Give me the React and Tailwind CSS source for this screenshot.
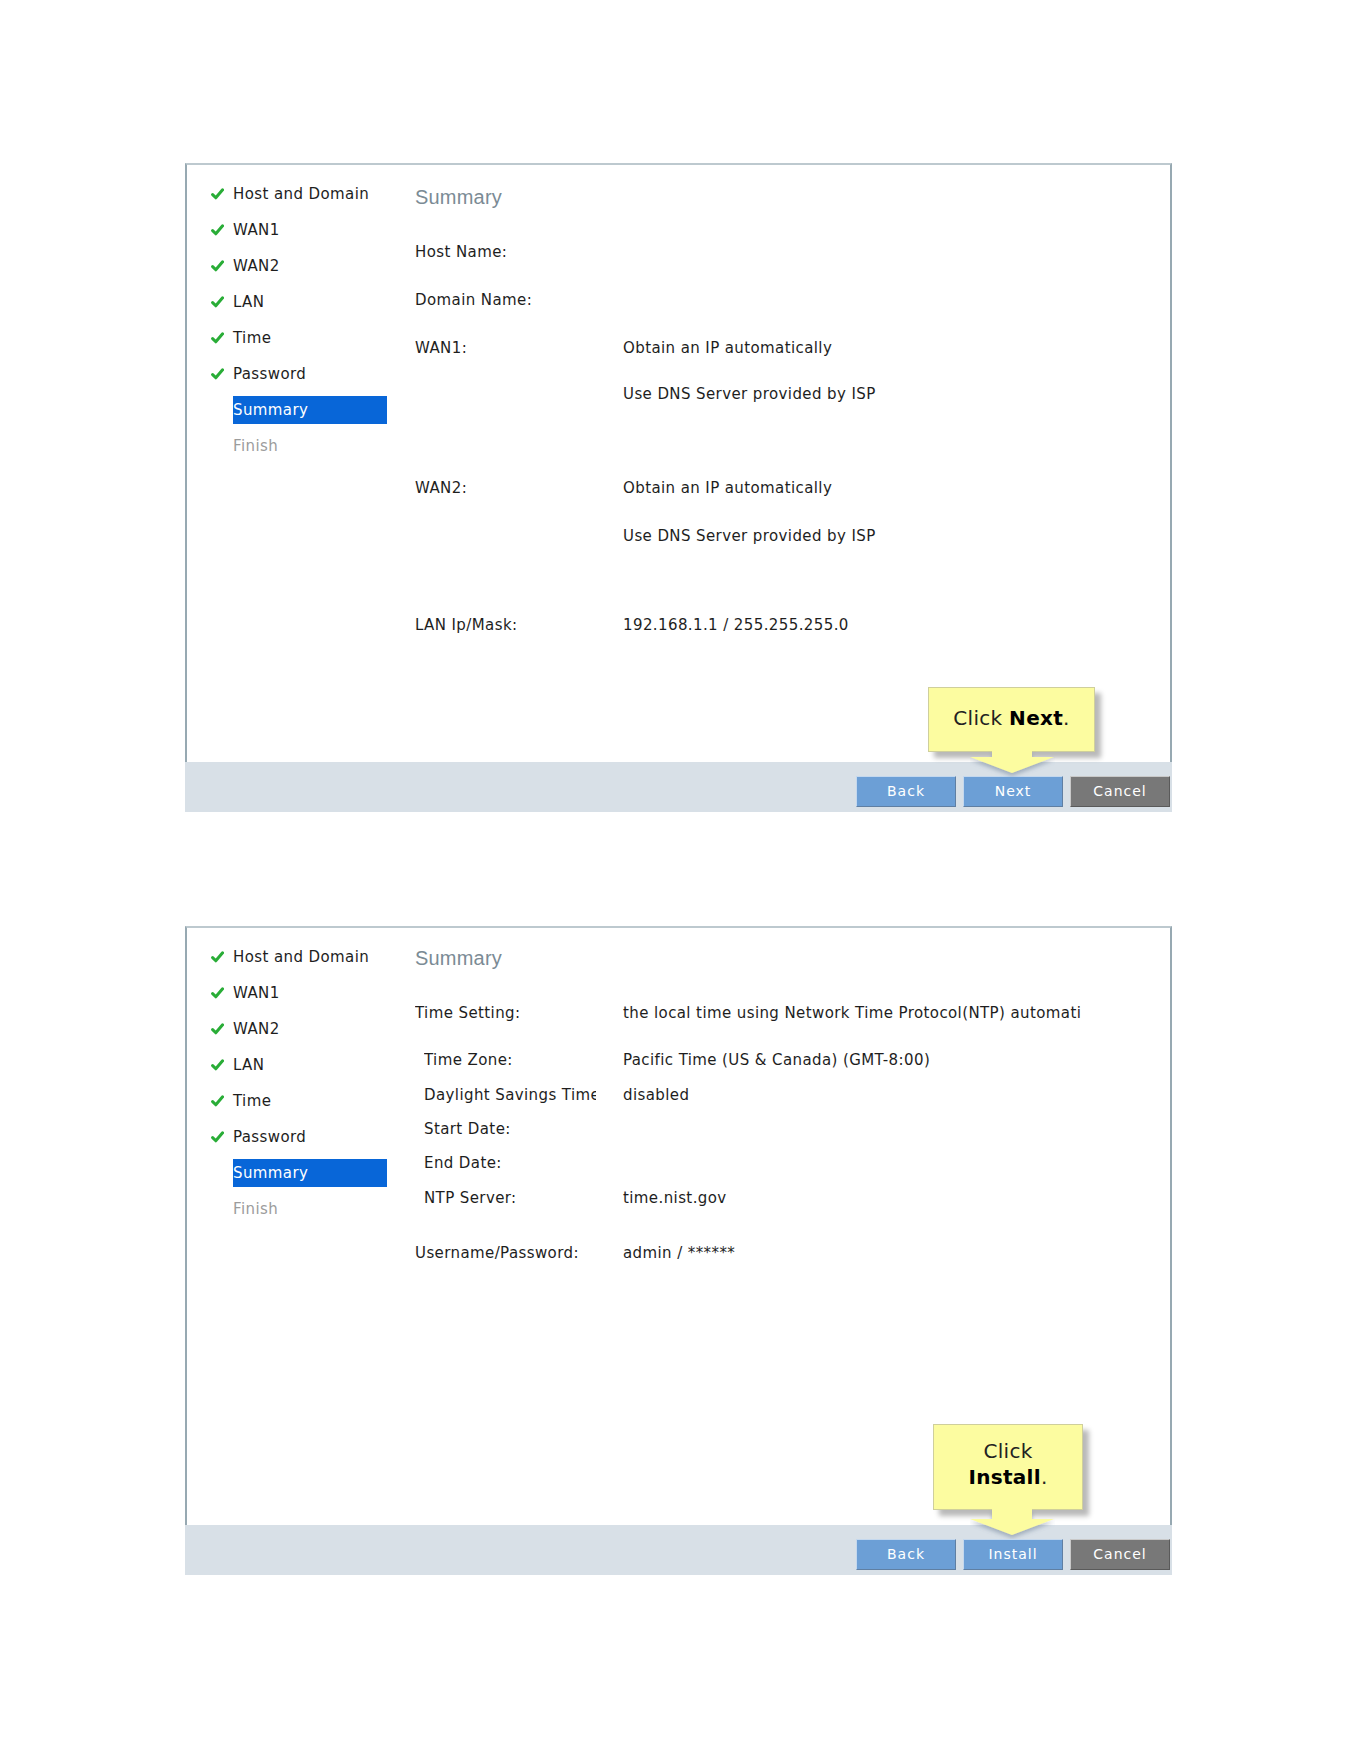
const NAV = ['Host and Domain', 'WAN1', 'WAN2', 'LAN', 'Time', 'Password']

function Check() {
  return (
    <svg width="13" height="12" viewBox="0 0 13 12" className="-ml-px shrink-0">
      <path d="M1.6 6.6 L4.8 9.8 L11.6 1.8" fill="none" stroke="#29ad37" strokeWidth="3" strokeLinecap="round" strokeLinejoin="round" />
    </svg>
  )
}

function Nav() {
  return (
    <div className="w-[228px] shrink-0 pl-[25px] pt-[11px]">
      {NAV.map((n) => (
        <div key={n} className="flex h-9 items-center gap-[9px]">
          <Check />
          <span>{n}</span>
        </div>
      ))}
      <div className="flex h-9 items-center pl-[21px]">
        <div className="flex h-[28px] w-[154px] items-center bg-[#0866d8] text-white">Summary</div>
      </div>
      <div className="flex h-9 items-center pl-[21px] text-[#9c9c9c]">Finish</div>
    </div>
  )
}

function Row({ label, value, indent, className }) {
  return (
    <div className={`flex h-5 items-center ${className}`}>
      <div className={`w-[208px] shrink-0 ${indent ? 'pl-[9px]' : ''}`}>
        <div className="w-[172px] overflow-hidden whitespace-nowrap">{label}</div>
      </div>
      <div className="whitespace-nowrap">{value}</div>
    </div>
  )
}

function Button({ children, gray }) {
  return (
    <div
      className={`flex h-[31px] w-[100px] items-center justify-center border text-[14px] tracking-[1px] text-white ${
        gray
          ? 'border-t-[#c9c9c9] border-l-[#c9c9c9] border-r-[#5a5a5a] border-b-[#5a5a5a] bg-[#787878]'
          : 'border-t-[#c4d8ee] border-l-[#c4d8ee] border-r-[#5f7fa3] border-b-[#5f7fa3] bg-[#6c9fd6]'
      }`}
    >
      {children}
    </div>
  )
}

function Arrow({ stem, className }) {
  const h = stem + 16
  return (
    <svg width="85" height={h + 4} viewBox={`0 0 85 ${h + 4}`} className={`absolute ${className}`}>
      <defs>
        <filter id={`sh${stem}`} x="-20%" y="-20%" width="140%" height="160%">
          <feDropShadow dx="0" dy="3" stdDeviation="2" floodColor="#5c7088" floodOpacity="0.45" />
        </filter>
      </defs>
      <polygon
        points={`22,0 62,0 62,${stem} 84,${stem} 42,${h} 0,${stem} 22,${stem}`}
        fill="#fcfca0"
        filter={`url(#sh${stem})`}
      />
    </svg>
  )
}

function Panel({ rows, headTop, callout, last }) {
  return (
    <div className="relative w-[987px]">
      <div className="flex h-[599px] border-x-2 border-t-2 border-x-[#97a9b2] border-t-[#bdc9cf] bg-white">
        <Nav />
        <div className={`flex-1 ${headTop}`}>
          <div className="h-[26px] font-['Liberation_Sans',Arial,sans-serif] text-[20px] leading-[26px] tracking-[0.2px] text-[#7b8b95]">
            Summary
          </div>
          {rows}
        </div>
      </div>
      <div className="flex h-[50px] items-start justify-end gap-[7px] bg-[#d8e0e7] pr-[2px] pt-[14px]">
        <Button>Back</Button>
        <Button>{last}</Button>
        <Button gray>Cancel</Button>
      </div>
      {callout}
    </div>
  )
}

export default function App() {
  const rows1 = (
    <>
      <Row label="Host Name:" className="mt-[32px]" />
      <Row label="Domain Name:" className="mt-[28px]" />
      <Row label="WAN1:" value="Obtain an IP automatically" className="mt-[28px]" />
      <Row value="Use DNS Server provided by ISP" className="mt-[26px]" />
      <Row label="WAN2:" value="Obtain an IP automatically" className="mt-[74px]" />
      <Row value="Use DNS Server provided by ISP" className="mt-[28px]" />
      <Row label="LAN Ip/Mask:" value="192.168.1.1 / 255.255.255.0" className="mt-[69px]" />
    </>
  )
  const rows2 = (
    <>
      <Row label="Time Setting:" value="the local time using Network Time Protocol(NTP) automati" className="mt-[32px]" />
      <Row indent label="Time Zone:" value="Pacific Time (US & Canada) (GMT-8:00)" className="mt-[27px]" />
      <Row indent label="Daylight Savings Time:" value="disabled" className="mt-[15px]" />
      <Row indent label="Start Date:" className="mt-[14px]" />
      <Row indent label="End Date:" className="mt-[14px]" />
      <Row indent label="NTP Server:" value="time.nist.gov" className="mt-[15px]" />
      <Row label="Username/Password:" value="admin / ******" className="mt-[35px]" />
    </>
  )

  const callout1 = (
    <>
      <div className="absolute left-[743px] top-[524px] flex h-[65px] w-[167px] items-center justify-center border border-[#cfcf9c] bg-[#fcfca0] pb-[4px] text-[20px] tracking-[0.3px] text-[#222] shadow-[6px_6px_5px_rgba(0,0,0,0.28)]">
        <span>
          Click <b className="text-black">Next</b>.
        </span>
      </div>
      <Arrow stem={6} className="left-[785px] top-[588px]" />
    </>
  )
  const callout2 = (
    <>
      <div className="absolute left-[748px] top-[498px] flex h-[86px] w-[150px] flex-col items-center justify-center border border-[#cfcf9c] bg-[#fcfca0] pb-[6px] text-[20px] leading-[26px] tracking-[0.3px] text-[#222] shadow-[6px_6px_5px_rgba(0,0,0,0.28)]">
        <span>Click</span>
        <span>
          <b className="text-black">Install</b>.
        </span>
      </div>
      <Arrow stem={10} className="left-[785px] top-[583px]" />
    </>
  )

  return (
    <div className="min-h-[1761px] bg-white pl-[185px] pt-[163px] font-['DejaVu_Sans',Verdana,sans-serif] text-[15px] tracking-[0.4px] text-[#1e1e1e]">
      <Panel rows={rows1} headTop="pt-[19px]" callout={callout1} last="Next" />
      <div className="mt-[114px]">
        <Panel rows={rows2} headTop="pt-[17px]" callout={callout2} last="Install" />
      </div>
    </div>
  )
}
